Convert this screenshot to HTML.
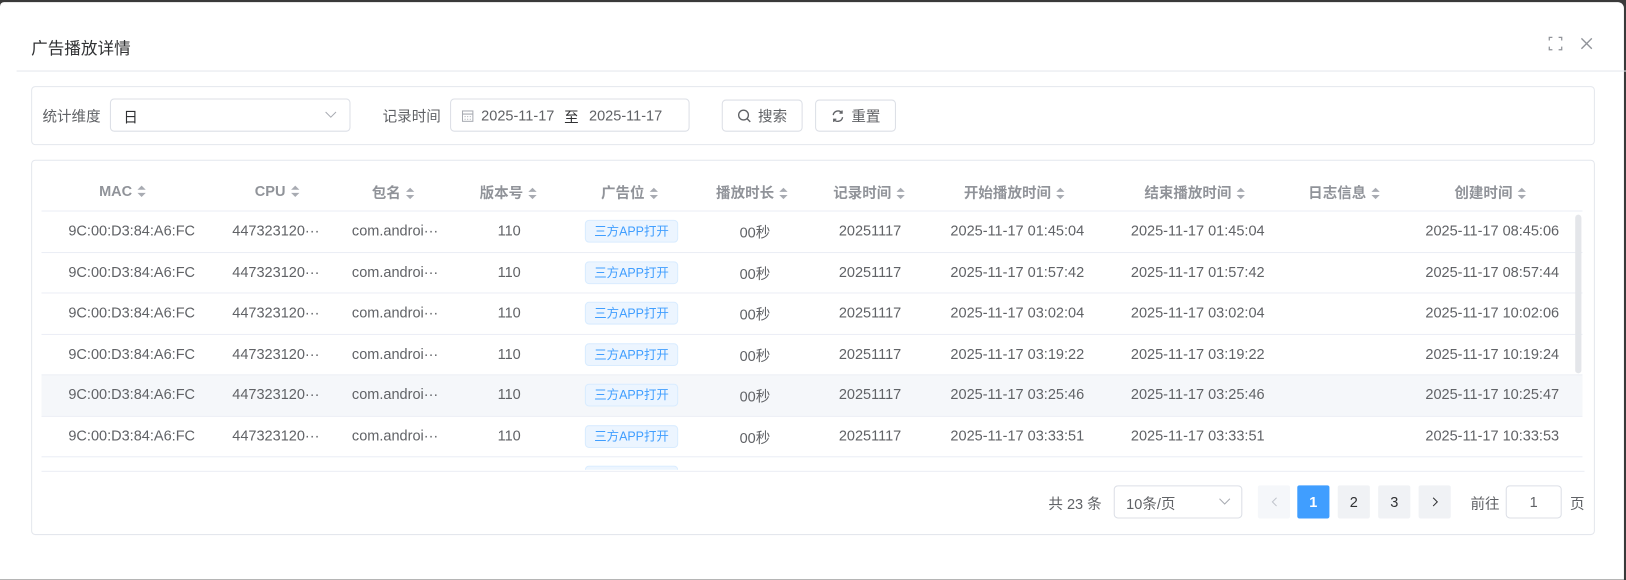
<!DOCTYPE html>
<html><head><meta charset="utf-8"><style>
*{box-sizing:border-box;margin:0;padding:0}
html,body{width:1626px;height:580px;overflow:hidden}
body{background:#3a3a3a;font-family:"Liberation Sans","Noto Sans CJK SC",sans-serif;font-size:14px;color:#606266;position:relative}
.outer{position:absolute;left:0;top:0;width:1626px;height:580px;overflow:hidden}
.wrap{position:absolute;left:0;top:0;width:1568px;height:559px;transform:scale(1.037);transform-origin:0 0}
.modal{position:absolute;left:0;top:2px;width:1566px;height:557px;background:#fff;border-radius:4px 6px 0 0}
.a{position:absolute}
.title{left:30px;top:31px;font-size:16px;color:#303133}
.hline{left:16px;top:66px;width:1594px;height:1px;background:#e4e7ed}
.card{border:1px solid #e4e7ed;border-radius:4px;background:#fff}
.inp{border:1px solid #dcdfe6;border-radius:4px;background:#fff}
.btn{border:1px solid #dcdfe6;border-radius:4px;background:#fff;display:flex;align-items:center;justify-content:center;gap:6px;color:#606266}
.th{font-weight:bold;color:#909399;display:flex;align-items:center;justify-content:center;gap:5px;transform:translateX(-50%);white-space:nowrap}
.sort{display:inline-block;width:8px;height:11px;position:relative}
.sort:before{content:"";position:absolute;left:0;top:0;border:4px solid transparent;border-bottom:4px solid #a8abb2;border-top:0}
.sort:after{content:"";position:absolute;left:0;bottom:0;border:4px solid transparent;border-top:4px solid #a8abb2;border-bottom:0}
.td{transform:translateX(-50%);white-space:nowrap;color:#606266}
.tag{background:#ecf5ff;border:1px solid #d9ecff;color:#409eff;font-size:12px;border-radius:4px;padding:0 8px;height:22px;line-height:20px}
.rl{height:1px;background:#ebeef5;left:40px;width:1486px}
.pg{width:31px;height:32px;border-radius:2px;background:#f0f2f5;display:flex;align-items:center;justify-content:center;color:#303133;font-size:14px}
</style></head><body>
<div class="outer">
<div class="wrap">
<div class="modal">
<div class="a title">广告播放详情</div>
<svg class="a" style="left:1493px;top:33px" width="14" height="14" viewBox="0 0 14 14" fill="none" stroke="#909399" stroke-width="1.2"><path d="M1 4V1h3M10 1h3v3M13 10v3h-3M4 13H1v-3"/></svg>
<svg class="a" style="left:1523px;top:33px" width="14" height="14" viewBox="0 0 14 14" stroke="#909399" stroke-width="1.3"><path d="M2 2l10 10M12 2L2 12"/></svg>
<div class="a hline"></div>

<div class="a card" style="left:30px;top:81px;width:1508px;height:57px"></div>
<div class="a" style="left:41px;top:100px">统计维度</div>
<div class="a inp" style="left:106px;top:93px;width:232px;height:32px"><span class="a" style="left:12px;top:7px;color:#303133">日</span>
<svg class="a" style="left:206px;top:11px" width="12" height="8" viewBox="0 0 12 8" fill="none" stroke="#a8abb2"><path d="M1 1l5 5 5-5"/></svg></div>
<div class="a" style="left:369px;top:100px">记录时间</div>
<div class="a inp" style="left:434px;top:93px;width:231px;height:32px">
<svg class="a" style="left:10px;top:9px" width="12" height="13" viewBox="0 0 12 13" fill="none" stroke="#a8abb2"><rect x="1" y="2" width="10" height="10"/><path d="M1 5h10M3 7.5h1M5.5 7.5h1M8 7.5h1M3 10h1M5.5 10h1M8 10h1"/></svg>
<span class="a" style="left:29px;top:7px;color:#606266">2025-11-17</span>
<span class="a" style="left:109px;top:7px;color:#303133">至</span>
<span class="a" style="left:133px;top:7px;color:#606266">2025-11-17</span></div>
<div class="a btn" style="left:696px;top:94px;width:78px;height:31px"><svg width="14" height="14" viewBox="0 0 14 14" fill="none" stroke="#606266" stroke-width="1.3"><circle cx="6" cy="6" r="4.7"/><path d="M9.5 9.5l3 3"/></svg>搜索</div>
<div class="a btn" style="left:786px;top:94px;width:78px;height:31px"><svg width="14" height="14" viewBox="0 0 14 14" fill="none" stroke="#606266" stroke-width="1.3"><path d="M2.5 6A4.7 4.7 0 0 1 11 4M11.5 8A4.7 4.7 0 0 1 3 10M11 1.5V4H8.5M3 12.5V10h2.5"/></svg>重置</div>

<div class="a card" style="left:30px;top:152px;width:1508px;height:362px"></div>
<div class="a th" style="left:118px;top:174px">MAC<i class="sort"></i></div>
<div class="a th" style="left:267px;top:174px">CPU<i class="sort"></i></div>
<div class="a th" style="left:379px;top:174px">包名<i class="sort"></i></div>
<div class="a th" style="left:490px;top:174px">版本号<i class="sort"></i></div>
<div class="a th" style="left:607px;top:174px">广告位<i class="sort"></i></div>
<div class="a th" style="left:725px;top:174px">播放时长<i class="sort"></i></div>
<div class="a th" style="left:838px;top:174px">记录时间<i class="sort"></i></div>
<div class="a th" style="left:978px;top:174px">开始播放时间<i class="sort"></i></div>
<div class="a th" style="left:1152px;top:174px">结束播放时间<i class="sort"></i></div>
<div class="a th" style="left:1296px;top:174px">日志信息<i class="sort"></i></div>
<div class="a th" style="left:1437px;top:174px">创建时间<i class="sort"></i></div>
<div class="a rl" style="top:201px"></div>
<div class="a" style="left:40px;top:360px;width:1486px;height:39px;background:#f5f7fa"></div>
<div id="rows"></div>
<div class="a rl" style="top:452px;width:1488px"></div>
<div class="a" style="left:1519px;top:205px;width:6px;height:153px;background:#e4e6ea;border-radius:3px"></div>

<div class="a" style="left:1011px;top:474px">共 23 条</div>
<div class="a inp" style="left:1074px;top:466px;width:124px;height:32px"><span class="a" style="left:11px;top:7px">10条/页</span>
<svg class="a" style="left:100px;top:11px" width="12" height="8" viewBox="0 0 12 8" fill="none" stroke="#a8abb2"><path d="M1 1l5 5 5-5"/></svg></div>
<div class="a pg" style="left:1213px;top:466px;background:#f5f7fa"><svg width="8" height="10" viewBox="0 0 8 10" fill="none" stroke="#c0c4cc"><path d="M6 1L2 5l4 4"/></svg></div>
<div class="a pg" style="left:1251px;top:466px;background:#409eff;color:#fff;font-weight:bold">1</div>
<div class="a pg" style="left:1290px;top:466px">2</div>
<div class="a pg" style="left:1329px;top:466px">3</div>
<div class="a pg" style="left:1368px;top:466px"><svg width="8" height="10" viewBox="0 0 8 10" fill="none" stroke="#303133"><path d="M2 1l4 4-4 4"/></svg></div>
<div class="a" style="left:1418px;top:474px">前往</div>
<div class="a inp" style="left:1452px;top:466px;width:54px;height:32px;text-align:center;line-height:30px">1</div>
<div class="a" style="left:1514px;top:474px">页</div>
</div>
</div>
</div>
<script>
var t=[["01:45:04","08:45:06"],["01:57:42","08:57:44"],["03:02:04","10:02:06"],["03:19:22","10:19:24"],["03:25:46","10:25:47"],["03:33:51","10:33:53"]];
var h="";
for(var i=0;i<7;i++){var y=212+i*39.5;
if(i<6){var c=[[127,"9C:00:D3:84:A6:FC"],[266,"447323120···"],[381,"com.androi···"],[491,"110"],[728,"00秒"],[839,"20251117"],[981,"2025-11-17 "+t[i][0]],[1155,"2025-11-17 "+t[i][0]],[1439,"2025-11-17 "+t[i][1]]];
c.forEach(function(e){h+='<div class="a td" style="left:'+e[0]+'px;top:'+y+'px">'+e[1]+'</div>';});
h+='<div class="a rl" style="top:'+(y+28.5)+'px"></div>';}
h+='<div class="a td tag" style="left:609px;top:'+(y-2)+'px">三方APP打开</div>';}
document.getElementById("rows").innerHTML=h;
</script>
<style>#rows .tag:last-child{clip-path:inset(0 0 calc(100% - 4px) 0)}</style>
</body></html>
